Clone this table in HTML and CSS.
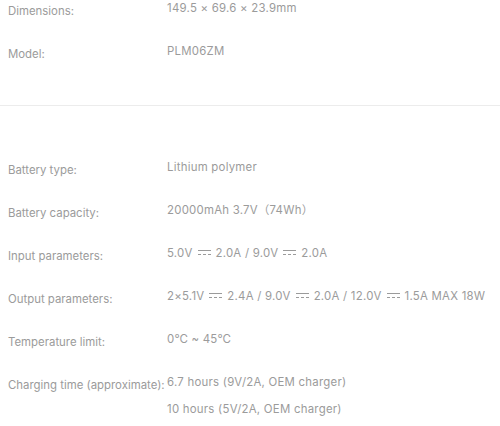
FILE: index.html
```html
<!DOCTYPE html>
<html>
<head>
<meta charset="utf-8">
<link rel="stylesheet" href="styles.css">
</head>
<body>
<div class="specs">
  <div class="section first">
    <div class="row"><div class="label">Dimensions:</div><div class="value"><div>149.5 × 69.6 × 23.9mm</div></div></div>
    <div class="row"><div class="label">Model:</div><div class="value"><div>PLM06ZM</div></div></div>
  </div>
  <div class="divider"></div>
  <div class="section second">
    <div class="row"><div class="label">Battery type:</div><div class="value"><div>Lithium polymer</div></div></div>
    <div class="row"><div class="label">Battery capacity:</div><div class="value"><div>20000mAh 3.7V（74Wh）</div></div></div>
    <div class="row"><div class="label">Input parameters:</div><div class="value"><div>5.0V <span class="dc"></span> 2.0A / 9.0V <span class="dc"></span> 2.0A</div></div></div>
    <div class="row"><div class="label">Output parameters:</div><div class="value"><div>2×5.1V <span class="dc"></span> 2.4A / 9.0V <span class="dc"></span> 2.0A / 12.0V <span class="dc"></span> 1.5A MAX 18W</div></div></div>
    <div class="row"><div class="label">Temperature limit:</div><div class="value"><div>0℃ ~ 45℃</div></div></div>
    <div class="row"><div class="label">Charging time (approximate):</div><div class="value"><div>6.7 hours (9V/2A, OEM charger)</div><div>10 hours (5V/2A, OEM charger)</div></div></div>
  </div>
</div>
</body>
</html>
```
FILE: styles.css
```css
html, body {
  margin: 0;
  padding: 0;
  background: #fff;
}
body {
  font-family: "Inter", "Noto Sans CJK SC", sans-serif;
  font-size: 11.4px;
  color: #9b9b9b;
}
.specs {
  padding: 0 0 0 8px;
}
.section {
  display: flex;
  flex-direction: column;
  gap: 24px;
}
.section.first {
  padding-top: 0;
  padding-bottom: 43px;
}
.section.second {
  padding-top: 53px;
}
.divider {
  height: 1px;
  background: #ececec;
  margin-left: -8px;
}
.row {
  display: grid;
  grid-template-columns: 159px 1fr;
  align-items: start;
}
.label {
  line-height: 16px;
  margin-top: 3px;
  white-space: nowrap;
}
.value {
  line-height: 16px;
  display: flex;
  flex-direction: column;
  gap: 11px;
  white-space: nowrap;
  letter-spacing: 0.25px;
}
.dc {
  display: inline-block;
  width: 13px;
  height: 5px;
  box-sizing: border-box;
  border-top: 1px solid #9b9b9b;
  background: repeating-linear-gradient(to right, #9b9b9b 0 3px, transparent 3px 5px) bottom / 100% 1px no-repeat;
  vertical-align: 2px;
  margin: 0 1.5px;
}
```
